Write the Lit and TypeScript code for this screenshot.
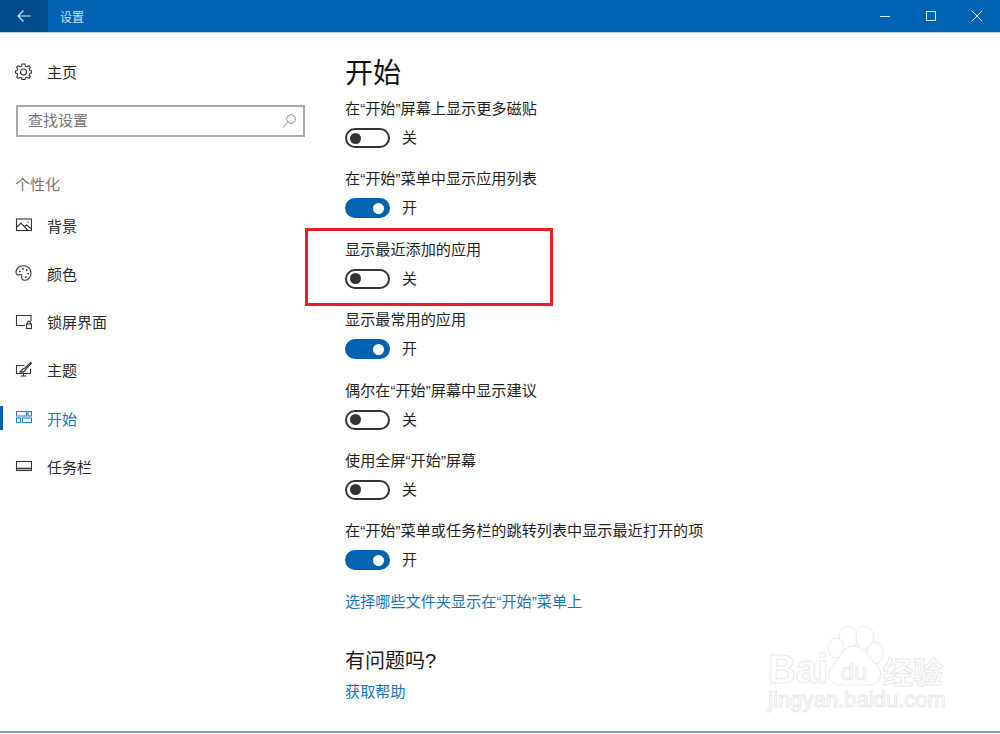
import { LitElement, html, css, svg } from "lit";
import { customElement } from "lit/decorators.js";

const NAV: { label: string; icon: any; active?: boolean }[] = [
  { label: "背景", icon: svg`<rect x="1.5" y="2" width="15" height="11.5"/><path d="M1.5 10.5 L6 6 L13 13.5"/><path d="M9.5 9.5 L11.5 8 L16.5 12"/><circle cx="13" cy="5" r=".7"/>` },
  { label: "颜色", icon: svg`<path d="M8.5 .8 C4 .8 1 3.8 1 7.3 C1 9.8 3 10.4 4.6 9.8 C6.4 9.2 7.2 10 6.8 11.3 C6.3 13.4 7.4 15.3 9.6 15.3 C13 15.3 16 12.3 16 8.2 C16 4 13 .8 8.5 .8 Z"/><circle cx="5" cy="6.4" r=".9"/><circle cx="8" cy="4" r=".9"/><circle cx="11.6" cy="5" r=".9"/><circle cx="13.2" cy="8.6" r=".9"/><circle cx="10.6" cy="12.2" r=".9"/>` },
  { label: "锁屏界面", icon: svg`<path d="M10 12.5 H1.5 V2.5 H16 V8"/><rect x="11.5" y="11" width="5" height="4.5"/><path d="M12.6 11 V9.5 A1.4 1.4 0 0 1 15.4 9.5 V11"/>` },
  { label: "主题", icon: svg`<path d="M9.5 4.5 H1.5 V12.5 H15.5 V7.5"/><path d="M5.5 15 H11.5 M8.5 12.5 V15" /><path d="M16.2 .8 L10 7 L8 8 L5 11 C8 11.5 10 10.5 10.5 8.5 L16.8 2"/>` },
  { label: "开始", active: true, icon: svg`<rect x="1.5" y="1.5" width="10" height="4.5"/><rect x="13" y="1.5" width="3.5" height="4.5"/><rect x="1.5" y="8" width="4" height="4.5"/><rect x="7.5" y="8" width="9" height="4.5"/>` },
  { label: "任务栏", icon: svg`<rect x="1.5" y="3.5" width="15" height="9"/><path d="M1.5 10.5 H16.5" stroke-width="1.5"/>` },
];

const ROWS: { label: string; on: boolean }[] = [
  { label: "在“开始”屏幕上显示更多磁贴", on: false },
  { label: "在“开始”菜单中显示应用列表", on: true },
  { label: "显示最近添加的应用", on: false },
  { label: "显示最常用的应用", on: true },
  { label: "偶尔在“开始”屏幕中显示建议", on: false },
  { label: "使用全屏“开始”屏幕", on: false },
  { label: "在“开始”菜单或任务栏的跳转列表中显示最近打开的项", on: true },
];

@customElement("app-root")
export class AppRoot extends LitElement {
  static styles = css`
    :host {
      display: block;
      position: relative;
      width: 1000px;
      height: 734px;
      overflow: hidden;
      background: #fff;
      color: #1f1f1f;
      font-family: "Liberation Sans", "Noto Sans CJK SC", sans-serif;
      font-size: 15px;
    }
    .window { display: flex; flex-direction: column; height: 731px; }
    .titlebar {
      flex: none;
      height: 32px;
      display: flex;
      align-items: center;
      background: #0063b1;
      border-bottom: 1px solid #b5d3ea;
      box-sizing: content-box;
      color: #cfe2f3;
    }
    .back {
      width: 48px;
      height: 32px;
      background: #004b8c;
      display: flex;
      align-items: center;
      justify-content: center;
    }
    .titlebar .title { margin-left: 12px; font-size: 12px; flex: 1; }
    .ctrl { width: 46px; height: 32px; display: flex; align-items: center; justify-content: center; }
    .ctrl svg, .back svg { display: block; fill: none; stroke: #dbe9f5; stroke-width: 1; }
    .body { flex: 1; display: flex; min-height: 0; }
    .side { width: 345px; flex: none; display: flex; flex-direction: column; }
    .home { height: 48px; margin-top: 14px; display: flex; align-items: center; padding-left: 15px; gap: 15px; }
    .icon { width: 17px; height: 17px; flex: none; fill: none; stroke: #333; stroke-width: 1.1; }
    .icon circle { fill: #333; stroke: none; }
    .search {
      margin: 10px 0 0 16px;
      width: 289px;
      height: 32px;
      box-sizing: border-box;
      border: 2px solid #a8a8a8;
      display: flex;
      align-items: center;
      padding: 0 6px 3px 10px;
      justify-content: space-between;
      color: #767676;
    }
    .search svg { fill: none; stroke: #8a8a8a; stroke-width: 1; display: block; margin-top: 2px; }
    .group { margin: 37px 0 0 15px; height: 22px; line-height: 22px; color: #767676; }
    .nav { margin-top: 5px; display: flex; flex-direction: column; }
    .item {
      height: 48.25px;
      display: flex;
      align-items: center;
      padding-left: 15px;
      gap: 15px;
      position: relative;
      color: #2b2b2b;
    }
    .item.active { color: #1a73bd; }
    .item.active .icon { stroke: #2a80c6; }
    .item.active::before {
      content: "";
      position: absolute;
      left: 0;
      top: 12px;
      width: 3px;
      height: 24px;
      background: #0063b1;
    }
    .main { flex: 1; display: flex; flex-direction: column; }
    h1 { margin: 18px 0 0; font-size: 28px; font-weight: 400; line-height: 45px; height: 45px; color: #111; }
    .row { height: 70.4px; display: flex; flex-direction: column; }
    .row .label { height: 24px; line-height: 24px; margin-top: 1px; font-size: 15.15px; white-space: nowrap; }
    .ctl { display: flex; align-items: center; gap: 12px; margin-top: 7px; height: 20px; }
    .ctl span { padding-bottom: 3px; }
    .toggle {
      width: 45px;
      height: 20px;
      box-sizing: border-box;
      border: 2px solid #333;
      border-radius: 10px;
      display: flex;
      align-items: center;
      padding: 0 3px;
    }
    .toggle i { width: 11px; height: 11px; border-radius: 50%; background: #333; display: block; }
    .toggle.on { background: #0063b1; border-color: #0063b1; justify-content: flex-end; padding: 0 4px; }
    .toggle.on i { background: #fff; }
    a { color: #1a73bd; text-decoration: none; line-height: 24px; height: 24px; display: block; font-size: 15.15px; }
    h2 { margin: 0; font-size: 20px; font-weight: 400; line-height: 30px; color: #1a1a1a; }
    .link-a { margin-top: 1px; }
    .help { margin-top: 32px; }
    .link-b { margin-top: 4px; }
    .edge { position: absolute; left: 0; right: 0; top: 731px; height: 2px; background: #6fa2cf; }
    .mark {
      position: absolute;
      left: 305px;
      top: 228px;
      width: 248px;
      height: 78px;
      box-sizing: border-box;
      border: 3px solid #ed1c24;
    }
    .wm { position: absolute; left: 760px; top: 620px; }
    .wm * { fill: #fff; stroke: #e8e8e8; stroke-width: 1; }
    .wm text { font-family: "Liberation Sans", "Noto Sans CJK SC", sans-serif; }
  `;

  render() {
    return html`
      <div class="window">
        <div class="titlebar">
          <div class="back">
            <svg width="16" height="16" viewBox="0 0 16 16"><path d="M14.5 8 H2 M7.5 2.5 L2 8 L7.5 13.5" stroke-width="1.2"/></svg>
          </div>
          <div class="title">设置</div>
          <div class="ctrl"><svg width="12" height="12" viewBox="0 0 12 12"><path d="M1 6.5 H11" stroke-width="1"/></svg></div>
          <div class="ctrl"><svg width="12" height="12" viewBox="0 0 12 12"><rect x="1.5" y="1.5" width="9" height="9"/></svg></div>
          <div class="ctrl"><svg width="12" height="12" viewBox="0 0 12 12"><path d="M1 1 L11 11 M11 1 L1 11"/></svg></div>
        </div>
        <div class="body">
          <div class="side">
            <div class="home">
              <svg class="icon" viewBox="0 0 17 17">
                <path d="M7 1 H10 L10.4 3 L12 3.7 L13.8 2.6 L15.4 4.2 L14.3 6 L15 7.6 L16.5 8 V10 L15 10.4 L14.3 12 L15.4 13.8 L13.8 15.4 L12 14.3 L10.4 15 L10 16.5 H7 L6.6 15 L5 14.3 L3.2 15.4 L1.6 13.8 L2.7 12 L2 10.4 L.5 10 V8 L2 7.6 L2.7 6 L1.6 4.2 L3.2 2.6 L5 3.7 L6.6 3 Z"/>
                <path d="M8.5 6 A3 3 0 1 0 8.5 12 A3 3 0 1 0 8.5 6 Z"/>
              </svg>
              <span>主页</span>
            </div>
            <div class="search">
              <span>查找设置</span>
              <svg width="16" height="16" viewBox="0 0 16 16"><circle cx="10" cy="6" r="4.3"/><path d="M7 9.2 L2 14.5"/></svg>
            </div>
            <div class="group">个性化</div>
            <div class="nav">
              ${NAV.map(n => html`
                <div class="item ${n.active ? "active" : ""}">
                  <svg class="icon" viewBox="0 0 17 17">${n.icon}</svg>
                  <span>${n.label}</span>
                </div>`)}
            </div>
          </div>
          <div class="main">
            <h1>开始</h1>
            ${ROWS.map(r => html`
              <div class="row">
                <div class="label">${r.label}</div>
                <div class="ctl">
                  <div class="toggle ${r.on ? "on" : ""}"><i></i></div>
                  <span>${r.on ? "开" : "关"}</span>
                </div>
              </div>`)}
            <a class="link-a">选择哪些文件夹显示在“开始”菜单上</a>
            <h2 class="help">有问题吗?</h2>
            <a class="link-b">获取帮助</a>
          </div>
        </div>
      </div>
      <div class="edge"></div>
      <div class="mark"></div>
      <svg class="wm" width="200" height="100" viewBox="0 0 200 100">
        <ellipse cx="88" cy="18" rx="9" ry="12"/>
        <ellipse cx="105" cy="18" rx="9" ry="12"/>
        <ellipse cx="76" cy="28" rx="8" ry="10"/>
        <ellipse cx="115" cy="33" rx="8" ry="11"/>
        <path d="M93 26 C82 26 80 38 74 44 C66 52 68 65 80 65 H108 C122 65 124 52 116 44 C108 38 106 26 93 26 Z"/>
        <text x="8" y="63" font-size="40" font-weight="700" textLength="60" lengthAdjust="spacingAndGlyphs">Bai</text>
        <text x="81" y="60" font-size="24" textLength="26" lengthAdjust="spacingAndGlyphs">du</text>
        <text x="123" y="63" font-size="30" font-weight="700">经验</text>
        <text x="8" y="87" font-size="22" textLength="178" lengthAdjust="spacingAndGlyphs">jingyan.baidu.com</text>
      </svg>
    `;
  }
}
